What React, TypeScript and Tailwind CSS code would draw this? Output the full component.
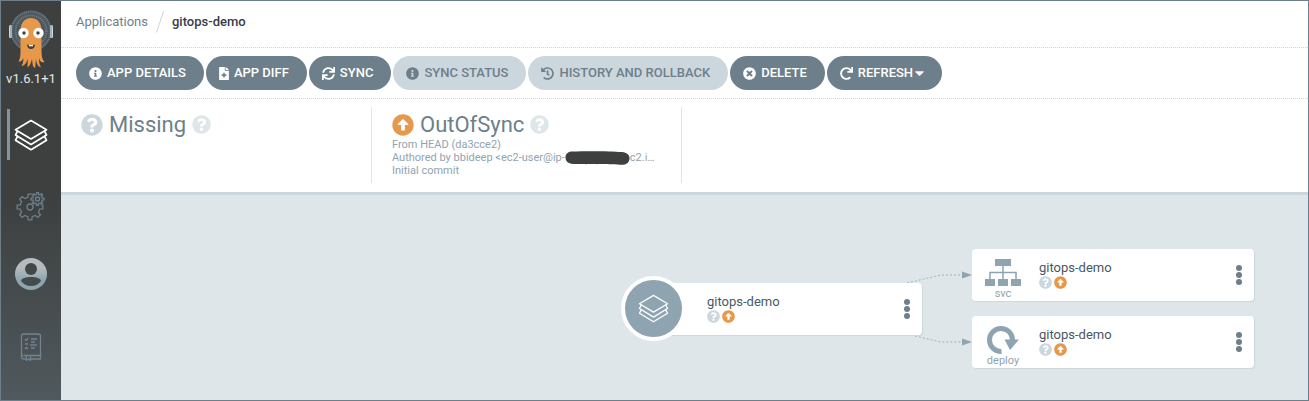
import type { ReactNode } from 'react';
import {
  FaArrowAltCircleUp,
  FaCaretDown,
  FaFileMedical,
  FaHistory,
  FaInfoCircle,
  FaQuestionCircle,
  FaRedo,
  FaSync,
  FaTimesCircle,
} from 'react-icons/fa';

function Logo() {
  return (
    <svg width="48" height="60" viewBox="0 0 48 60" aria-hidden="true">
      <circle cx="24" cy="22" r="20.5" fill="#4d575d" />
      <circle cx="24" cy="22" r="19.5" fill="none" stroke="#6d7f8b" strokeWidth="2" strokeDasharray="1 1" />
      <circle cx="24" cy="22" r="15.5" fill="none" stroke="#6d7f8b" strokeWidth="2" strokeDasharray="1 1" />
      <rect x="2" y="16" width="3" height="13" rx="1.5" fill="#ccd6dd" />
      <rect x="43" y="16" width="3" height="13" rx="1.5" fill="#ccd6dd" />
      <path d="M4 17V28M44 17V28" stroke="#8fa4b1" strokeWidth="1.5" />
      <path
        d="M24 9C30 9 34 13.500 34.500 20V40C34.500 47 35 50 37.500 53C34.500 54 32.500 52 32 49C31.800 53 32.500 56 34 58C30.500 58 29.500 54 29 50C28.500 54 28.500 57 28 59C25.500 58 25.500 54 25 50C24 54 23 57 20.500 58.500C20.500 55 21 53 20.500 50C19.500 54 18 56.500 14.500 57C16 54.500 16.500 52 16.300 49C15 52 13.500 53 11.500 52.500C13.500 49 13.500 46 13.500 40V20C14 13.500 18 9 24 9Z"
        fill="#e6984b"
      />
      <circle cx="16.500" cy="24" r="5.200" fill="#fff" />
      <circle cx="31.500" cy="24" r="5.200" fill="#fff" />
      <circle cx="17" cy="24" r="1.700" fill="#3d403f" />
      <circle cx="31" cy="24" r="1.700" fill="#3d403f" />
      <path d="M20 35.500Q24 36.500 28 35.500Q27.500 40 24 40Q20.500 40 20 35.500Z" fill="#3d403f" />
      <path d="M22 36H26V37.300H22Z" fill="#fff" />
    </svg>
  );
}

function Layers({ className, width }: { className: string; width: number }) {
  return (
    <svg
      className={className}
      viewBox="0 0 34 32"
      fill="none"
      stroke="currentColor"
      strokeWidth={width}
      strokeLinejoin="round"
      strokeLinecap="round"
      aria-hidden="true"
    >
      <path d="M17 1.500L32.500 10.800L17 20L1.500 10.800Z" />
      <path d="M3.500 12.200L1.500 16L17 25.500L32.500 16L30.500 12.200" />
      <path d="M3.500 17.500L1.500 21.200L17 30.700L32.500 21.200L30.500 17.500" />
    </svg>
  );
}

function gear(cx: number, cy: number, outer: number, inner: number, teeth: number) {
  const step = (Math.PI * 2) / teeth;
  const parts: string[] = [];
  for (let i = 0; i < teeth; i++) {
    const a = i * step;
    const corners: [number, number][] = [
      [inner, -0.28],
      [outer, -0.18],
      [outer, 0.18],
      [inner, 0.28],
    ];
    for (const [r, f] of corners) {
      parts.push(`${(cx + r * Math.cos(a + f * step)).toFixed(2)} ${(cy + r * Math.sin(a + f * step)).toFixed(2)}`);
    }
  }
  return `M${parts.join('L')}Z`;
}

function Gears() {
  return (
    <svg width="30" height="30" viewBox="0 0 30 30" fill="none" stroke="#6d7f8b" strokeWidth="1.300" aria-hidden="true">
      <path d={gear(14, 16, 13, 10, 8)} />
      <circle cx="14" cy="16" r="3" />
      <circle cx="21.500" cy="8" r="7.500" fill="#404342" stroke="none" />
      <path d={gear(21.5, 8, 6.5, 4.7, 8)} />
      <circle cx="21.500" cy="8" r="2" />
    </svg>
  );
}

function Account() {
  return (
    <svg width="32" height="34" viewBox="0 0 32 34" aria-hidden="true">
      <defs>
        <linearGradient id="account" x1="0" y1="0" x2="0" y2="1">
          <stop offset="0.300" stopColor="#b5bcbf" />
          <stop offset="0.700" stopColor="#8fa4b1" />
        </linearGradient>
      </defs>
      <circle cx="16" cy="17" r="16" fill="url(#account)" />
      <circle cx="16" cy="12" r="6" fill="#434747" />
      <path d="M6 24C6.500 21 11 20 16 20S25.500 21 26 24C24 27 20 29 16 29S8 27 6 24Z" fill="#464a4b" />
    </svg>
  );
}

function Book() {
  return (
    <svg width="22" height="28" viewBox="0 0 22 28" fill="none" stroke="#71838f" strokeWidth="1.300" aria-hidden="true">
      <path d="M3.500 22.500H20.500V3Q20.500 1 18.500 1H3.500Q1.500 1 1.500 3V24Q1.500 26 3.500 26H6" />
      <path d="M3 22.500Q1.500 22.500 1.500 24M11 26H20.500V22.500M6.500 22.500V27.300L8.500 26L10.500 27.300V22.500" />
      <path d="M5 6L6.500 7.500L8 5M5 11H8M5 16L6.500 14.500L8 16M11 6H17M11 9H15M10 12H17M11 15H15" />
    </svg>
  );
}

type ActionProps = { icon: ReactNode; label: string; muted?: boolean; caret?: boolean };

function Action({ icon, label, muted, caret }: ActionProps) {
  const tone = muted ? 'bg-[#ccd6dd] text-[#6d7f8b]' : 'bg-[#6d7f8b] text-white';
  return (
    <button
      type="button"
      disabled={muted}
      className={`flex h-[34px] items-center gap-[5px] rounded-full pr-[18px] pl-[13px] text-[13px] font-medium whitespace-nowrap ${tone}`}
    >
      {icon}
      <span className="flex items-center">
        {label}
        {caret && <FaCaretDown className="ml-0.5 h-4 w-[9px]" />}
      </span>
    </button>
  );
}

function StatusIcons() {
  return (
    <div className="flex gap-0.5">
      <FaQuestionCircle className="size-[13px] text-[#ccd6dd]" />
      <FaArrowAltCircleUp className="size-[13px] text-[#e6984b]" />
    </div>
  );
}

function MenuButton() {
  return (
    <button type="button" aria-label="Resource actions" className="ml-auto flex w-[30px] justify-center text-[#6d7f8b]">
      <svg width="6" height="20" viewBox="0 0 6 20" fill="currentColor" aria-hidden="true">
        <circle cx="3" cy="3" r="3" />
        <circle cx="3" cy="10" r="3" />
        <circle cx="3" cy="17" r="3" />
      </svg>
    </button>
  );
}

function ResourceCard({ kind, icon, place }: { kind: string; icon: ReactNode; place: string }) {
  return (
    <div className={`absolute flex h-[52px] w-[282px] items-center rounded bg-white shadow-[1px_1px_1px_#ccd6dd] ${place}`}>
      <div className="flex w-[62px] flex-col items-center pt-2 text-[11px] leading-3 text-[#8fa4b1]">
        {icon}
        <span>{kind}</span>
      </div>
      <div className="pb-0.5 pl-[5px]">
        <div className="text-[13px] leading-4 text-[#495763]">gitops-demo</div>
        <StatusIcons />
      </div>
      <MenuButton />
    </div>
  );
}

function Svc() {
  return (
    <svg width="36" height="30" viewBox="0 0 36 30" fill="currentColor" aria-hidden="true">
      <path d="M10 1H26V8H10ZM0 21H10V28H0ZM13 21H23V28H13ZM26 21H36V28H26Z" />
      <path d="M18 8V21M5 21V14.500H31V21" fill="none" stroke="currentColor" strokeWidth="1.500" />
    </svg>
  );
}

function Deploy() {
  return (
    <svg width="36" height="30" viewBox="0 0 36 30" aria-hidden="true">
      <path d="M16.500 26.500A11.500 11.500 0 1 1 27.500 15" fill="none" stroke="currentColor" strokeWidth="5" />
      <path d="M19.500 14.500H34L25 25Z" fill="currentColor" />
    </svg>
  );
}

export default function App() {
  return (
    <div className="flex min-h-screen border border-[#6d7f8b] bg-white font-['Roboto',sans-serif] text-[#6d7f8b]">
      <aside className="flex w-[60px] shrink-0 flex-col items-center bg-linear-to-b from-[#3d403f] from-50% to-[#50595e] pt-2">
        <Logo />
        <div className="text-[13px] leading-5 whitespace-nowrap text-[#e3e8ea]">v1.6.1+1</div>
        <nav className="flex w-full flex-col pt-5">
          <a
            href="#applications"
            aria-label="Applications"
            className="ml-1.5 flex h-[51px] items-center border-l-[3px] border-[#8195a1] pl-1"
          >
            <Layers className="h-8 w-[34px] text-white" width={1.7} />
          </a>
          <a href="#settings" aria-label="Settings" className="flex h-[91px] items-center justify-center">
            <Gears />
          </a>
          <a href="#user" aria-label="User info" className="flex h-[46px] items-center justify-center">
            <Account />
          </a>
          <a href="#docs" aria-label="Documentation" className="flex h-[100px] items-center justify-center">
            <Book />
          </a>
        </nav>
      </aside>

      <main className="flex min-w-0 flex-1 flex-col">
        <div className="flex h-[47px] items-center border-b border-dotted border-[#ccd6dd] px-[15px] pb-1 text-[13px]">
          <a href="#applications">Applications</a>
          <svg className="mx-2" width="8" height="22" viewBox="0 0 8 22" aria-hidden="true">
            <path d="M0.500 21.500L7.500 0.500" stroke="#ccd6dd" />
          </svg>
          <span className="font-medium text-[#363c4a]">gitops-demo</span>
        </div>

        <div className="flex h-[51px] items-center gap-0.5 border-b border-dotted border-[#ccd6dd] px-[15px]">
          <Action icon={<FaInfoCircle className="size-[13px]" />} label="APP DETAILS" />
          <Action icon={<FaFileMedical className="h-[13px] w-2.5" />} label="APP DIFF" />
          <Action icon={<FaSync className="size-[13px]" />} label="SYNC" />
          <Action icon={<FaInfoCircle className="size-[13px]" />} label="SYNC STATUS" muted />
          <Action icon={<FaHistory className="size-[13px]" />} label="HISTORY AND ROLLBACK" muted />
          <Action icon={<FaTimesCircle className="size-[13px]" />} label="DELETE" />
          <Action icon={<FaRedo className="size-[13px]" />} label="REFRESH" caret />
        </div>

        <div className="flex border-b-[3px] border-[#ccd6dd] pt-2 pb-[9px]">
          <section className="h-[76px] w-[311px] border-r border-[#dee6e9] pt-1 pl-5">
            <h2 className="flex items-center gap-1.5 text-[22px] leading-[27px]">
              <FaQuestionCircle className="size-[22px] text-[#ccd6dd]" />
              Missing
              <FaQuestionCircle className="size-[19px] text-[#dee6e9]" />
            </h2>
          </section>
          <section className="h-[76px] w-[310px] border-r border-[#dee6e9] pt-1 pl-5">
            <h2 className="flex items-center gap-1.5 text-[22px] leading-[27px]">
              <FaArrowAltCircleUp className="size-[22px] text-[#e6984b]" />
              OutOfSync
              <FaQuestionCircle className="size-[19px] text-[#dee6e9]" />
            </h2>
            <div className="text-[11px] leading-[13px] whitespace-nowrap text-[#8fa4b1]">
              <div>From HEAD (da3cce2)</div>
              <div className="flex h-[13px]">
                Authored by bbideep &lt;ec2-user@ip-
                <svg width="65" height="14" viewBox="0 0 65 14" aria-hidden="true">
                  <path
                    d="M7 0.500C20 0 45 0 57 1C62 1.500 65 4 64.500 8C64 12 61 14 56 13.800C50 13 20 13.500 8 13C3 12.500 0.500 10 0.500 6.500C0.500 3 3 0.500 7 0.500Z"
                    fill="#3d403f"
                  />
                </svg>
                c2.i…
              </div>
              <div>Initial commit</div>
            </div>
          </section>
        </div>

        <div className="relative min-h-[205px] flex-1 overflow-hidden bg-[#dee6e9]">
          <svg className="absolute top-[70px] left-[840px]" width="72" height="86" viewBox="0 0 72 86" aria-hidden="true">
            <path
              d="M6 18L40 10H62M14 71L40 77H62"
              fill="none"
              stroke="#a3b1b8"
              strokeWidth="1"
              strokeDasharray="2 2"
            />
            <path d="M61 6.500L71 10L61 13.500ZM61 73.500L71 77L61 80.500Z" fill="#8fa4b1" />
          </svg>

          <div className="absolute top-[88px] left-[579px] flex h-[52px] w-[282px] items-center rounded bg-white pl-[67px] shadow-[1px_1px_1px_#ccd6dd]">
            <div className="absolute top-[-7px] left-[-19px] flex size-[65px] items-center justify-center rounded-full border-4 border-white bg-[#8fa4b1]">
              <Layers className="h-[29px] w-[31px] text-white" width={1.4} />
            </div>
            <div className="pb-0.5">
              <div className="text-[13px] leading-4 text-[#495763]">gitops-demo</div>
              <StatusIcons />
            </div>
            <MenuButton />
          </div>

          <ResourceCard kind="svc" icon={<Svc />} place="top-[54px] left-[911px]" />
          <ResourceCard kind="deploy" icon={<Deploy />} place="top-[121px] left-[911px]" />
        </div>
      </main>
    </div>
  );
}
